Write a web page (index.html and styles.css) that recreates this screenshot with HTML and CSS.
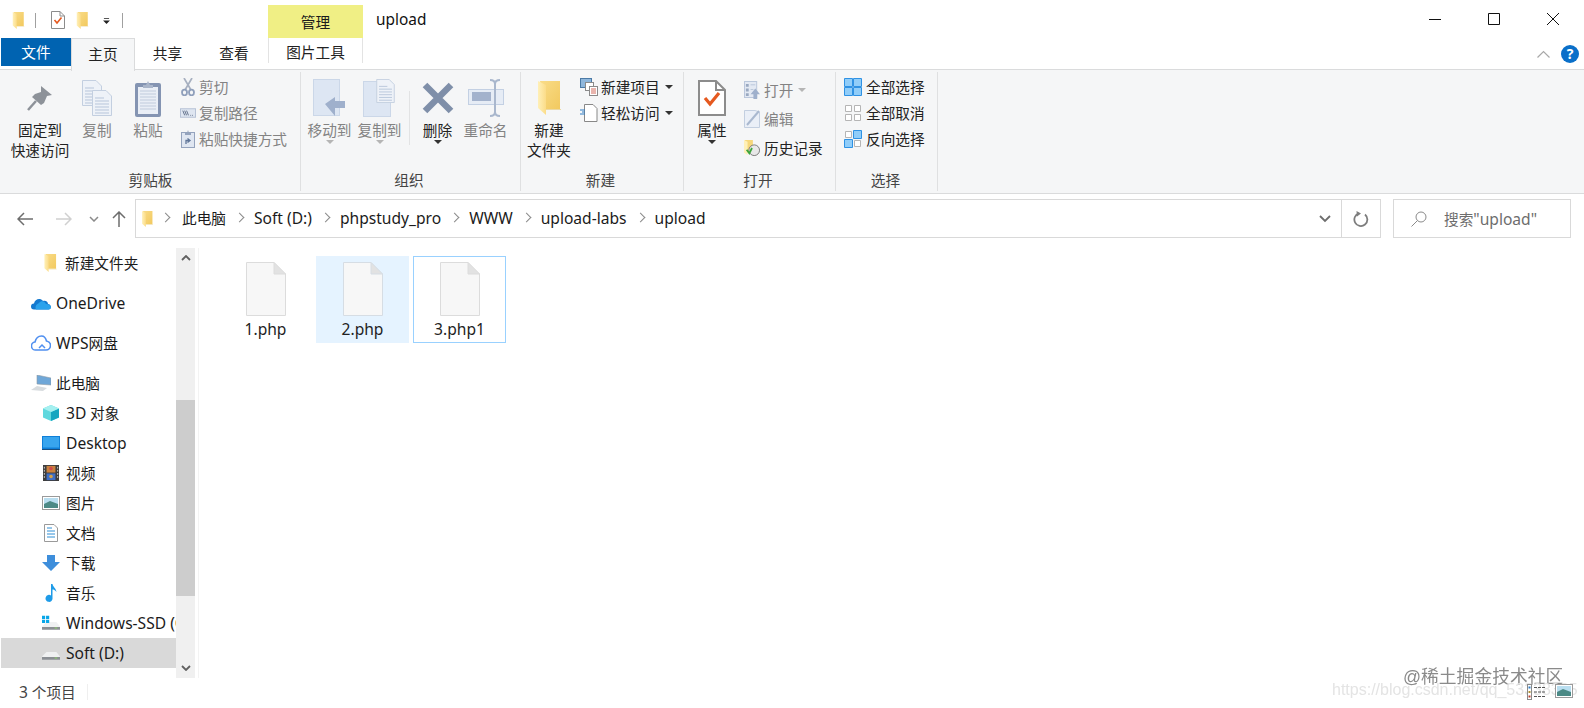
FILE: index.html
```html
<!DOCTYPE html>
<html lang="zh">
<head>
<meta charset="utf-8">
<title>upload</title>
<link rel="stylesheet" href="styles.css">
</head>
<body>
<svg class="defs" width="0" height="0">
  <defs>
    <linearGradient id="flap" x1="0" x2="1" y1="0" y2="0"><stop offset="0" stop-color="#fff0b8"/><stop offset="1" stop-color="#fbdc88"/></linearGradient>
    <linearGradient id="back" x1="0" x2="1" y1="0" y2="1"><stop offset="0" stop-color="#f9dc88"/><stop offset="1" stop-color="#f2c95f"/></linearGradient>
    <symbol id="folder" viewBox="0 0 23 34">
      <path d="M2 0H22V28H6Z" fill="url(#back)"/>
      <path d="M0 0L8 4V34L0 27Z" fill="url(#flap)"/>
      <path d="M8 28H23V29H8Z" fill="#ecd9a4"/>
    </symbol>
    <symbol id="page" viewBox="0 0 14 18">
      <path d="M.5.5H9L13.5 5V17.5H.5Z" fill="#fff" stroke="#8c8c8c"/>
      <path d="M9 .5V5H13.5" fill="none" stroke="#8c8c8c"/>
      <path d="M3.5 9L6 12L10.5 6.5" fill="none" stroke="#e5591f" stroke-width="1.6"/>
    </symbol>
    <symbol id="sheet" viewBox="0 0 20 26">
      <path d="M.5.5H14L19.5 6V25.5H.5Z" fill="#eef2f8" stroke="#c3cfe0"/>
      <path d="M3 8H12M3 11H17M3 14H17M3 17H17M3 20H17M3 23H17" stroke="#b7c5da"/>
    </symbol>
    <symbol id="drive" viewBox="0 0 20 10">
      <path d="M0 6L5 1H16L20 6V9H0Z" fill="#f0f1f2"/>
      <path d="M0 6.500H20V9.500H0Z" fill="#8b8f94"/>
      <path d="M14 7H17V8H14Z" fill="#8fd16a"/>
    </symbol>
  </defs>
</svg>

<div class="window">
  <header class="titlebar">
    <div class="qat">
      <svg class="qat-folder"><use href="#folder"/></svg>
      <span class="qat-sep"></span>
      <svg class="qat-page"><use href="#page"/></svg>
      <svg class="qat-folder"><use href="#folder"/></svg>
      <svg class="qat-more" viewBox="0 0 8 7"><path d="M1 0H7V1H1Z M0 3H8L4 7Z" fill="#222"/></svg>
      <span class="qat-sep"></span>
    </div>
    <div class="context-tab">管理</div>
    <div class="window-title">upload</div>
    <div class="window-controls">
      <svg class="win-btn" viewBox="0 0 12 12"><path d="M0 6.500H12" stroke="#111" fill="none"/></svg>
      <svg class="win-btn" viewBox="0 0 12 12"><path d="M.5.5H11.500V11.500H.5Z" stroke="#111" fill="none"/></svg>
      <svg class="win-btn" viewBox="0 0 12 12"><path d="M0 0L12 12M12 0L0 12" stroke="#111" fill="none"/></svg>
    </div>
  </header>

  <nav class="tabs">
    <div class="tab tab-file">文件</div>
    <div class="tab tab-home">主页</div>
    <div class="tab tab-share">共享</div>
    <div class="tab tab-view">查看</div>
    <div class="tab tab-tools">图片工具</div>
    <div class="tabs-right">
      <svg class="collapse" viewBox="0 0 13 8"><path d="M.5 7.500L6.500 1.500L12.500 7.500" fill="none" stroke="#a8a8a8" stroke-width="1.200"/></svg>
      <span class="help">?</span>
    </div>
  </nav>

  <section class="ribbon">
    <div class="group group-clip">
      <div class="group-body">
        <div class="big big-pin">
          <div class="big-ic"><svg width="26" height="27" viewBox="0 0 26 27"><path d="M14 1L25 10L20 11L17 18L14 20L5 12L8 9L14 7Z" fill="#8d9299"/><path d="M9 16L1 25" stroke="#8d9299" stroke-width="2.500"/></svg></div>
          <div class="big-label">固定到<br>快速访问</div>
        </div>
        <div class="big big-copy off">
          <div class="big-ic"><svg width="30" height="36" viewBox="0 0 30 36"><use href="#sheet" x="0" y="0" width="20" height="26"/><use href="#sheet" x="10" y="10" width="20" height="26"/></svg></div>
          <div class="big-label">复制</div>
        </div>
        <div class="big big-paste off">
          <div class="big-ic"><svg width="26" height="37" viewBox="0 0 26 37"><rect x="0" y="3" width="26" height="34" rx="2" fill="#8494b2"/><rect x="3" y="7" width="20" height="27" fill="#e9eef6"/><path d="M5 11H21M5 14H21M5 17H21M5 20H21M5 23H21M5 26H21M5 29H21" stroke="#c0cbdc"/><path d="M8 5H11L13 1L15 5H18V8H8Z" fill="#a9b5ca"/></svg></div>
          <div class="big-label">粘贴</div>
        </div>
        <div class="small-col">
          <div class="small off">
            <svg class="sm-ic" viewBox="0 0 16 18"><path d="M4 0L11 12M12 0L5 12" stroke="#a7b0c0" stroke-width="1.700" fill="none"/><ellipse cx="4.500" cy="14.500" rx="2.500" ry="2.800" fill="none" stroke="#8f9fbb" stroke-width="1.800"/><ellipse cx="11.500" cy="14.500" rx="2.500" ry="2.800" fill="none" stroke="#8f9fbb" stroke-width="1.800"/></svg>
            <span>剪切</span>
          </div>
          <div class="small off">
            <svg class="sm-ic" viewBox="0 0 17 10"><rect x=".5" y=".5" width="16" height="9" fill="#dfe6f1" stroke="#b4c0d4"/><path d="M3 2.500L5 7.500M5 2.500L7 7.500M7 2.500L9 7.500M11 7.500H11.800M13 7.500H13.800" stroke="#5d6c86" fill="none"/></svg>
            <span>复制路径</span>
          </div>
          <div class="small off">
            <svg class="sm-ic" viewBox="0 0 14 18"><rect x=".5" y="2.500" width="13" height="15" fill="#dfe6f1" stroke="#94a3bd"/><path d="M4 3H6L7 0L8 3H10V5H4Z" fill="#94a3bd"/><path d="M5 14V10.500H8M6.500 8.500L9 10.500L6.500 12.500" stroke="#5f7598" stroke-width="1.300" fill="none"/></svg>
            <span>粘贴快捷方式</span>
          </div>
        </div>
      </div>
      <div class="group-label">剪贴板</div>
    </div>

    <div class="group group-org">
      <div class="group-body">
        <div class="big big-move off">
          <div class="big-ic"><svg width="33" height="38" viewBox="0 0 33 38"><rect x=".5" y=".5" width="26" height="36" fill="#dde6f3" stroke="#cbd7e8"/><path d="M12 25L22 18V22H32V29H22V37Z" fill="#9fb0cc"/></svg></div>
          <div class="big-label">移动到</div><span class="caret caret-off"></span>
        </div>
        <div class="big big-copyto off">
          <div class="big-ic"><svg width="33" height="38" viewBox="0 0 33 38"><rect x=".5" y="2.500" width="27" height="35" fill="#dde6f3" stroke="#cbd7e8"/><use href="#sheet" x="13" y="0" width="19" height="24"/></svg></div>
          <div class="big-label">复制到</div><span class="caret caret-off"></span>
        </div>
        <span class="org-sep"></span>
        <div class="big big-del">
          <div class="big-ic"><svg width="32" height="32" viewBox="0 0 32 32"><path d="M3 3L29 29M29 3L3 29" stroke="#7f8fa9" stroke-width="6.500"/></svg></div>
          <div class="big-label">删除</div><span class="caret"></span>
        </div>
        <div class="big big-ren off">
          <div class="big-ic"><svg width="36" height="38" viewBox="0 0 36 38"><rect x=".5" y="10.500" width="35" height="15" fill="#e6ecf5" stroke="#c3d0e3"/><rect x="4" y="13" width="19" height="9" fill="#a3b2cc"/><path d="M22 1C25 1 27 2 27 5V33C27 36 25 37 22 37M32 1C29 1 27 2 27 5M27 33C27 36 29 37 32 37" stroke="#a9b7cd" stroke-width="2" fill="none"/></svg></div>
          <div class="big-label">重命名</div>
        </div>
      </div>
      <div class="group-label">组织</div>
    </div>

    <div class="group group-new">
      <div class="group-body">
        <div class="big big-newf">
          <div class="big-ic"><svg class="ic-newf"><use href="#folder"/></svg></div>
          <div class="big-label">新建<br>文件夹</div>
        </div>
        <div class="small-col">
          <div class="small">
            <svg class="sm-ic sm-wide" viewBox="0 0 18 18"><rect x=".5" y=".5" width="11" height="9" fill="#8fb7dc" stroke="#4b7aa6"/><rect x="5.500" y="4.500" width="8" height="8" fill="#fff" stroke="#8a8a8a"/><rect x="9.500" y="8.500" width="8" height="9" fill="#fff" stroke="#8a8a8a"/><path d="M11 11H16M11 13H16M11 15H16" stroke="#d36b5d"/></svg>
            <span>新建项目</span><span class="caret caret-inline"></span>
          </div>
          <div class="small">
            <svg class="sm-ic sm-wide" viewBox="0 0 18 18"><path d="M4.500.5H13L17 4.500V17.500H4.500Z" fill="#fff" stroke="#888"/><path d="M0 6H5M2 8H5M0 10H5" stroke="#2f7cc4"/></svg>
            <span>轻松访问</span><span class="caret caret-inline"></span>
          </div>
        </div>
      </div>
      <div class="group-label">新建</div>
    </div>

    <div class="group group-open">
      <div class="group-body">
        <div class="big big-prop">
          <div class="big-ic"><svg width="28" height="36" viewBox="0 0 14 18"><use href="#page" width="14" height="18"/></svg></div>
          <div class="big-label">属性</div><span class="caret"></span>
        </div>
        <div class="small-col open-col">
          <div class="small off">
            <svg class="sm-ic" viewBox="0 0 17 19"><rect x=".5" y=".5" width="13" height="17" fill="#e3e9f3" stroke="#b8c5da"/><path d="M2 3H5V6H2ZM2 8H5V11H2ZM2 13H5V16H2Z" fill="#9aa9c1"/><path d="M7 4H12M7 9H10" stroke="#b8c5da"/><path d="M7 14L12 8L17 14H14V19H10V14Z" fill="#9fb0cc"/></svg>
            <span>打开</span><span class="caret caret-inline caret-off"></span>
          </div>
          <div class="small off">
            <svg class="sm-ic" viewBox="0 0 16 18"><path d="M.5.500H11L15.500 2V17.500H.5Z" fill="#eaeff7" stroke="#c3cfe0"/><path d="M3 15L15 1" stroke="#a9b8cf" stroke-width="2"/></svg>
            <span>编辑</span>
          </div>
          <div class="small">
            <svg class="sm-ic" viewBox="0 0 18 18"><path d="M1 0H10V14H1Z" fill="#f6d77b"/><path d="M0 0L4 2V17L0 14Z" fill="#fff0b8"/><circle cx="11.500" cy="11.500" r="6" fill="#e8e8e8" stroke="#707070"/><path d="M3 11L6 15L9 9" stroke="#3ba53b" stroke-width="2" fill="none"/></svg>
            <span>历史记录</span>
          </div>
        </div>
      </div>
      <div class="group-label">打开</div>
    </div>

    <div class="group group-sel">
      <div class="group-body">
        <div class="small-col">
          <div class="small">
            <svg class="sm-ic sm-sel" viewBox="0 0 18 18"><path d="M.5.500H8.500V8.500H.5ZM9.500.5H17.500V8.500H9.500ZM.5 9.500H8.500V17.500H.5ZM9.500 9.500H17.500V17.500H9.500Z" fill="#90cdf9" stroke="#2f92e4"/></svg>
            <span>全部选择</span>
          </div>
          <div class="small">
            <svg class="sm-ic sm-sel" viewBox="0 0 18 18"><path d="M1.500 1.500H7.500V7.500H1.500ZM10.500 1.500H16.500V7.500H10.500ZM1.500 10.500H7.500V16.500H1.500ZM10.500 10.500H16.500V16.500H10.500Z" fill="#fff" stroke="#b5b5b5"/></svg>
            <span>全部取消</span>
          </div>
          <div class="small">
            <svg class="sm-ic sm-sel" viewBox="0 0 18 18"><path d="M1.500 1.500H7.500V7.500H1.500ZM10.500 10.500H16.500V16.500H10.500Z" fill="#fff" stroke="#b5b5b5"/><path d="M9.500.5H17.500V8.500H9.500ZM.5 9.500H8.500V17.500H.5Z" fill="#90cdf9" stroke="#2f92e4"/></svg>
            <span>反向选择</span>
          </div>
        </div>
      </div>
      <div class="group-label">选择</div>
    </div>
  </section>

  <div class="address-row">
    <div class="nav-buttons">
      <svg class="arrow" viewBox="0 0 16 14"><path d="M16 7H1M7 1L1 7L7 13" fill="none" stroke="#6d6d6d" stroke-width="1.500"/></svg>
      <svg class="arrow arrow-off" viewBox="0 0 16 14"><path d="M0 7H15M9 1L15 7L9 13" fill="none" stroke="#d0d0d0" stroke-width="1.500"/></svg>
      <svg class="arrow-down" viewBox="0 0 10 6"><path d="M1 1L5 5L9 1" fill="none" stroke="#8a8a8a" stroke-width="1.500"/></svg>
      <svg class="arrow-up" viewBox="0 0 14 16"><path d="M7 16V1M1 7L7 1L13 7" fill="none" stroke="#6d6d6d" stroke-width="1.500"/></svg>
    </div>
    <div class="address-box">
      <svg class="crumb-folder"><use href="#folder"/></svg>
      <ol class="crumbs">
        <li>此电脑</li><li class="lat">Soft (D:)</li><li class="lat">phpstudy_pro</li><li class="lat">WWW</li><li class="lat">upload-labs</li><li class="lat">upload</li>
      </ol>
      <svg class="addr-drop" viewBox="0 0 12 8"><path d="M1 1L6 6L11 1" fill="none" stroke="#6d6d6d" stroke-width="1.800"/></svg>
      <div class="refresh"><svg width="16" height="16" viewBox="0 0 16 16"><path d="M6 2.300A6.500 6.500 0 1 0 12 3.500" fill="none" stroke="#7d7d7d" stroke-width="1.800"/><path d="M3.500 0L8 2.500L4 5.500Z" fill="#7d7d7d"/></svg></div>
    </div>
    <div class="search-box">
      <svg width="16" height="16" viewBox="0 0 16 16"><circle cx="10" cy="6" r="5" fill="none" stroke="#8a8a8a"/><path d="M6.500 9.500L.5 15.500" stroke="#8a8a8a"/></svg>
      <span>搜索<span class="lat">"upload"</span></span>
    </div>
  </div>

  <main class="content">
    <aside class="tree">
      <div class="row lvl2 spaced"><svg class="ic-treefolder"><use href="#folder"/></svg><span>新建文件夹</span></div>
      <div class="row lvl1 spaced"><svg class="ic" viewBox="0 0 20 14"><path d="M3 13.500A3 3 0 0 1 3 7.500C4 3 9 1.500 12 5C15 4 17 6 17 8C19 8 20 10 20 11C20 12.500 19 13.500 17.500 13.500Z" fill="#1479cf"/><path d="M8 7C10 4 14 5 15 8C18 8 20 10 20 11C20 12.500 19 13.500 17.500 13.500H5C3.500 10 6 8 8 7Z" fill="#2aa2ec"/></svg><span class="lat">OneDrive</span></div>
      <div class="row lvl1 spaced"><svg class="ic" viewBox="0 0 20 16"><path d="M5 15A4 4 0 0 1 4 7C5 3 7 1 10.500 1C13.500 1 15 4 15.500 6C18 6.500 19.500 8.500 19.500 10.500C19.500 13 17.500 15 15 15Z" fill="none" stroke="#4f8ff0" stroke-width="1.600"/><path d="M8 13L11 10L14 13" fill="none" stroke="#4f8ff0" stroke-width="1.500"/></svg><span><span class="lat">WPS</span>网盘</span></div>
      <div class="row lvl1"><svg class="ic" viewBox="0 0 20 16"><path d="M6 0L20 3V10L6 9Z" fill="#6fa7d8" stroke="#8e9aa5" stroke-width=".6"/><path d="M0 15L6 11L16 13L12 16Z" fill="#d8dcdf"/></svg><span>此电脑</span></div>
      <div class="row lvl2"><svg class="ic" viewBox="0 0 18 18"><path d="M9 0L18 4V14L9 18L0 14V4Z" fill="#5fd8de"/><path d="M9 8L18 4V14L9 18Z" fill="#16a6c0"/><path d="M0 4L9 0L18 4L9 8Z" fill="#a5f0f0"/></svg><span><span class="lat">3D</span> 对象</span></div>
      <div class="row lvl2"><svg class="ic" viewBox="0 0 18 14"><rect width="18" height="13" fill="#0f7fd8"/><rect x="1" y="1" width="16" height="10.500" fill="#38a5ee"/><path d="M0 13H18V14H0Z" fill="#1a4f80"/></svg><span class="lat">Desktop</span></div>
      <div class="row lvl2"><svg class="ic" viewBox="0 0 18 18"><rect width="18" height="18" fill="#3d3d3d"/><rect x="4" y="1" width="10" height="7.500" fill="#c9823f"/><rect x="4" y="9.500" width="10" height="7.500" fill="#3f6fc6"/><circle cx="9" cy="4" r="2" fill="#d34a4a"/><circle cx="9" cy="13" r="2" fill="#d3a14a"/><path d="M1.500 2V16M16.500 2V16" stroke="#ddd" stroke-dasharray="2 1.500"/></svg><span>视频</span></div>
      <div class="row lvl2"><svg class="ic" viewBox="0 0 18 14"><rect x=".5" y=".5" width="17" height="13" fill="#fff" stroke="#9a9a9a"/><rect x="2" y="2" width="14" height="10" fill="#b9def0"/><path d="M2 8L8 5L16 8V12H2Z" fill="#4c8a86"/></svg><span>图片</span></div>
      <div class="row lvl2"><svg class="ic ic-doc" viewBox="0 0 14 18"><path d="M.5.5H10L13.500 4V17.500H.5Z" fill="#fff" stroke="#9a9a9a"/><path d="M3 4H8M3 7H11M3 10H11M3 13H11" stroke="#2f8fd6"/></svg><span>文档</span></div>
      <div class="row lvl2"><svg class="ic" viewBox="0 0 18 16"><path d="M5 0H13V7H18L9 16L0 7H5Z" fill="#3e8edb"/></svg><span>下载</span></div>
      <div class="row lvl2"><svg class="ic ic-doc" viewBox="0 0 12 18"><path d="M6 0H7.500C8 3 11 4 11.500 8C10 6 8.500 5.500 7.500 5.500V14A3.500 3.500 0 1 1 6 11.500Z" fill="#1e9be8"/></svg><span>音乐</span></div>
      <div class="row lvl2"><svg class="ic" viewBox="0 0 20 16"><use href="#drive" x="0" y="6" width="20" height="10"/><path d="M0 0H3.500V3.500H0ZM4.500 0H8V3.500H4.500ZM0 4.500H3.500V8H0ZM4.500 4.500H8V8H4.500Z" fill="#08a6e8"/></svg><span class="lat">Windows-SSD (C:)</span></div>
      <div class="row lvl2 selected"><svg class="ic" viewBox="0 0 20 16"><use href="#drive" x="0" y="6" width="20" height="10"/></svg><span class="lat">Soft (D:)</span></div>
    </aside>
    <div class="scrollbar">
      <div class="sb-btn"><svg width="10" height="6" viewBox="0 0 10 6"><path d="M1 5L5 1L9 5" fill="none" stroke="#606060" stroke-width="1.800"/></svg></div>
      <div class="sb-gap"></div>
      <div class="sb-thumb"></div>
      <div class="sb-rest"></div>
      <div class="sb-btn"><svg width="10" height="6" viewBox="0 0 10 6"><path d="M1 1L5 5L9 1" fill="none" stroke="#606060" stroke-width="1.800"/></svg></div>
    </div>
    <div class="files">
      <div class="file">
        <svg class="file-ic" viewBox="0 0 40 54"><path d="M.5.5H28L39.500 12V53.500H.5Z" fill="#f7f7f7" stroke="#dcdcdc"/><path d="M28 .5V12H39.500Z" fill="#e2e2e2" stroke="#dcdcdc"/></svg>
        <span class="lat">1.php</span>
      </div>
      <div class="file hovered">
        <svg class="file-ic" viewBox="0 0 40 54"><path d="M.5.5H28L39.500 12V53.500H.5Z" fill="#f7f7f7" stroke="#d6dde4"/><path d="M28 .5V12H39.500Z" fill="#e2e2e2" stroke="#d6dde4"/></svg>
        <span class="lat">2.php</span>
      </div>
      <div class="file focused">
        <svg class="file-ic" viewBox="0 0 40 54"><path d="M.5.5H28L39.500 12V53.500H.5Z" fill="#f7f7f7" stroke="#dcdcdc"/><path d="M28 .5V12H39.500Z" fill="#e2e2e2" stroke="#dcdcdc"/></svg>
        <span class="lat">3.php1</span>
      </div>
    </div>
  </main>

  <footer class="status">
    <span class="status-count"><span class="lat">3</span> 个项目</span>
    <span class="status-sep"></span>
  </footer>
</div>

<div class="watermark">
  <div class="wm-juejin">@稀土掘金技术社区</div>
  <div class="wm-csdn">https://blog.csdn.net/qq_53338335</div>
</div>
<div class="view-icons">
  <svg width="19" height="16" viewBox="0 0 19 16"><rect x=".5" y=".5" width="4" height="15" fill="#fff" stroke="#8a8a8a"/><path d="M1.500 2.500H3.500V4.500H1.500Z" fill="#2f7cc4"/><path d="M1.500 7H3.500V9H1.500Z" fill="#b0902f"/><path d="M1.500 11.500H3.500V13.500H1.500Z" fill="#b83c2a"/><path d="M7 3.500H18M7 8H18M7 12.500H18" stroke="#555" stroke-dasharray="3 1"/></svg>
  <svg width="18" height="14" viewBox="0 0 18 14"><rect x=".5" y=".5" width="17" height="13" fill="#fff" stroke="#9a9a9a"/><rect x="2" y="2" width="14" height="10" fill="#b9def0"/><path d="M2 8L8 5L16 8V12H2Z" fill="#4c8a86"/></svg>
</div>
</body>
</html>
```

FILE: styles.css
```css
* { box-sizing: border-box; }
html, body { margin: 0; height: 100%; }
body {
  background: #fff;
  color: #1b1b1b;
  font-family: "Noto Sans", "Noto Sans CJK SC", sans-serif;
  font-size: 14.67px;
  line-height: 20px;
  overflow: hidden;
  position: relative;
}
svg { display: block; flex: none; }
.defs { position: absolute; }
.lat { font-size: 15.600px; }
.window { display: flex; flex-direction: column; height: 708px; }

/* title bar */
.titlebar { display: flex; height: 38px; flex: none; }
.qat { width: 268px; display: flex; align-items: center; padding: 0 0 0 12px; }
.qat-folder { width: 13px; height: 17px; margin-top: 2px; }
.qat-sep { width: 1px; height: 15px; background: #a0a0a0; margin: 2px 0 0 10px; }
.qat-page { width: 14px; height: 18px; margin: 2px 11px 0 15px; }
.qat-more { width: 7px; height: 6px; margin: 4px 0 0 14px; }
.qat .qat-sep:last-child { margin-left: 12px; }
.context-tab { width: 95px; margin-top: 5px; background: #f0ef85; text-align: center; line-height: 34px; }
.window-title { margin: 10px 0 0 13px; font-size: 15.400px; color: #111; }
.window-controls { margin-left: auto; display: flex; align-items: flex-start; padding: 13px 25px 0 0; gap: 47px; }
.win-btn { width: 12px; height: 12px; }

/* tabs */
.tabs { display: flex; height: 31px; flex: none; padding-left: 1px; align-items: flex-start; position: relative; z-index: 1; }
.tab { text-align: center; line-height: 30px; color: #222; height: 31px; }
.tab-file { width: 70px; height: 28px; line-height: 28px; background: #0063b1; color: #fff; }
.tab-home { width: 64px; height: 33px; background: #f5f6f7; border: 1px solid #dadbdc; border-bottom: 0; }
.tab-share { width: 65px; }
.tab-view { width: 68px; }
.tab-tools { width: 95px; height: 25px; line-height: 28px; border-left: 1px solid #e3e3e3; border-right: 1px solid #e3e3e3; }
.tabs-right { margin-left: auto; display: flex; align-items: center; height: 31px; padding-right: 5px; gap: 11px; }
.collapse { width: 13px; height: 8px; margin-top: 0; }
.help {
  width: 18px; height: 18px; border-radius: 50%;
  background: #0a6fc9; color: #fff; font-weight: 700; font-size: 14px;
  line-height: 18px; text-align: center;
}

/* ribbon */
.ribbon {
  display: flex; height: 125px; flex: none; padding-left: 1px;
  background: #f5f6f7;
  border-top: 1px solid #dadbdc; border-bottom: 1px solid #dadbdc;
}
.group { display: flex; flex-direction: column; margin: 2px 0; border-right: 1px solid #dfe0e1; }
.group-body { flex: 1; display: flex; min-height: 0; }
.group-label { height: 20px; text-align: center; color: #444; margin-bottom: 1px; padding-right: 3px; }
.group-clip .group-label { padding-right: 0; }
.group-sel .group-label { padding-right: 2px; }
.group-clip { width: 300px; }
.group-org { width: 220px; }
.group-new { width: 163px; }
.group-open { width: 152px; }
.group-sel { width: 102px; }

.big { display: flex; flex-direction: column; align-items: center; text-align: center; flex: none; padding-top: 4px; color: #222; }
.big-ic { height: 44px; display: flex; align-items: center; justify-content: center; }
.big-label { white-space: nowrap; }
.off, .off .big-label { color: #838383; }
.big-pin { width: 70px; margin-left: 4px; }
.big-copy { width: 44px; }
.big-paste { width: 58px; }
.group-org .group-body { padding-left: 2px; }
.big-move { width: 53px; }
.big-copyto { width: 47px; }
.org-sep { width: 1px; height: 54px; margin: 19px 4px 0 6px; background: #e2e3e4; flex: none; }
.big-del { width: 47px; }
.big-ren { width: 49px; }
.big-newf { width: 56px; }
.ic-newf { width: 23px; height: 34px; }
.big-prop { width: 56px; }

.caret { width: 0; height: 0; border: 4px solid transparent; border-top-color: #333; border-bottom: 0; margin-top: 0; flex: none; }
.caret-off { border-top-color: #b5b5b5; }
.caret-inline { margin-left: 5px; }

.small-col { display: flex; flex-direction: column; padding: 2px 0 0 3px; flex: none; }
.small { display: flex; align-items: center; height: 26px; white-space: nowrap; color: #222; }
.small.off { color: #838383; }
.sm-ic { width: 16px; height: 18px; margin-right: 3px; flex: none; }
.sm-wide { width: 18px; margin-right: 3px; }
.sm-sel { width: 18px; margin: 0 4px 0 5px; }
.open-col { padding: 3px 0 0 4px; }
.open-col .small { height: 29px; }
.open-col .sm-ic { margin-right: 4px; }
.group-sel .small-col { padding-left: 3px; }

/* address bar */
.address-row { display: flex; flex: none; height: 44px; padding: 5px 13px 0 0; }
.nav-buttons { width: 135px; flex: none; display: flex; align-items: center; padding-left: 17px; }
.arrow { width: 16px; height: 14px; }
.arrow-off { margin-left: 23px; }
.arrow-down { width: 10px; height: 6px; margin-left: 17px; }
.arrow-up { width: 14px; height: 16px; margin-left: 13px; }
.address-box { flex: 1; display: flex; align-items: center; border: 1px solid #d9d9d9; padding-left: 5px; min-width: 0; }
.crumb-folder { width: 13px; height: 16px; }
.crumbs { display: flex; list-style: none; margin: -2px 0 0; padding: 0 0 0 8px; flex: 1; }
.crumbs li { display: flex; align-items: center; white-space: nowrap; }
.crumbs li::before {
  content: ""; width: 6px; height: 6px; margin: 0 13px 0 0;
  border-top: 1.500px solid #8a8a8a; border-right: 1.500px solid #8a8a8a;
  transform: rotate(45deg);
}
.crumbs li + li::before { margin-left: 10px; margin-right: 11px; }
.addr-drop { width: 12px; height: 8px; margin-right: 10px; }
.refresh { width: 39px; align-self: stretch; border-left: 1px solid #d9d9d9; display: flex; align-items: center; justify-content: center; }
.search-box { width: 178px; flex: none; margin-left: 12px; border: 1px solid #d9d9d9; display: flex; align-items: center; padding-left: 17px; gap: 17px; color: #6d6d6d; }

/* main */
.content { flex: none; height: 430px; margin-top: 10px; display: flex; padding-left: 1px; }
.tree { width: 175px; flex: none; overflow: hidden; }
.row { height: 30px; display: flex; align-items: center; white-space: nowrap; color: #1b1b1b; }
.row.spaced { margin-bottom: 10px; }
.lvl1 { padding-left: 30px; }
.lvl2 { padding-left: 41px; }
.ic { width: 20px; height: 16px; margin-right: 5px; flex: none; }
.lvl2 .ic { width: 18px; margin-right: 6px; }
.lvl2 .ic-doc { width: 14px; height: 18px; margin: 0 8px 0 2px; }
.ic-treefolder { width: 13px; height: 18px; margin: 0 8px 0 2px; }
.selected { background: #d9d9d9; }
.scrollbar { width: 19px; flex: none; display: flex; flex-direction: column; background: #f0f0f0; }
.sb-btn { height: 20px; display: flex; align-items: center; justify-content: center; }
.sb-gap { height: 132px; }
.sb-thumb { height: 196px; background: #cdcdcd; }
.sb-rest { flex: 1; }
.files { flex: 1; display: flex; align-items: flex-start; gap: 4px; border-left: 1px solid #f3f3f3; margin-left: 3px; padding: 8px 0 0 20px; }
.file { width: 93px; height: 87px; display: flex; flex-direction: column; align-items: center; padding-top: 6px; border: 1px solid transparent; }
.file-ic { width: 40px; height: 54px; margin-top: -1px; }
.file span { margin-top: 3px; color: #222; }
.hovered { background: #e5f3ff; border-color: #e5f3ff; }
.focused { border-color: #99d1ff; }

/* status */
.status { flex: 1; display: flex; align-items: center; padding: 0 0 2px 19px; color: #444; }
.status-sep { width: 1px; height: 16px; background: #efefef; margin-left: 11px; }

/* overlays */
.watermark {
  position: absolute; right: 0; top: 0; width: 252px; height: 708px; pointer-events: none;
  font-family: "Liberation Sans", "Noto Sans CJK SC", sans-serif;
  white-space: nowrap; overflow: hidden; filter: blur(.35px);
}
.wm-juejin { position: absolute; left: 71px; top: 666px; font-size: 17.800px; line-height: 22px; color: #8a8a8a; }
.wm-csdn { position: absolute; left: 0; top: 680px; font-size: 16px; line-height: 20px; color: #e4e4e4; }
.view-icons { position: absolute; left: 1527px; top: 684px; display: flex; gap: 9px; }
```
